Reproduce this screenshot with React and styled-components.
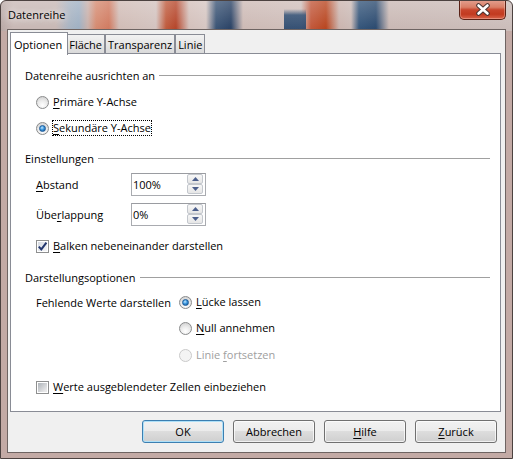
import React from "react";
import styled, { createGlobalStyle } from "styled-components";

const GlobalStyle = createGlobalStyle`
  html, body {
    margin: 0;
    padding: 0;
    background: #ffffff;
  }
  body {
    font-family: "Open Sans", "Noto Sans", sans-serif;
    font-size: 11px;
    color: #000;
  }
  u {
    text-decoration-thickness: 1px;
    text-underline-offset: 2px;
  }
`;

// blurred desktop behind the aero glass
const glassStripes = `linear-gradient(to right,
  #b9a9a6 0px, #c8b8b5 12px, #c8b8b5 55px, #a9b4c2 68px, #9fb0c3 78px,
  #c9b0aa 87px, #d58a70 95px, #d07a60 108px, #d1bcb6 118px, #d3c3bf 155px,
  #bf5a3c 165px, #b5452a 175px, #d4c0bb 188px, #d6c6c2 205px, #3a5475 215px,
  #2a4265 230px, #cdbab5 242px, #d0bfbb 300px, #c1573a 310px, #b8451f 325px,
  #cbb4ae 338px, #cbbab6 350px, #34557a 358px, #2b4a6f 375px, #c9b8b4 388px,
  #cbbdba 513px)`;

const Window = styled.div`
  width: 513px;
  height: 459px;
  box-sizing: border-box;
  display: flex;
  flex-direction: column;
  border: 1px solid #4c4240;
  border-radius: 6px 6px 0 0;
  overflow: hidden;
  background:
    linear-gradient(to bottom, rgba(255, 255, 255, 0.22), rgba(255, 255, 255, 0) 28px) 0 0 / 100% 30px no-repeat,
    linear-gradient(to bottom, rgba(37, 69, 108, 0) 8px, rgba(37, 69, 108, 0.9) 14px) 283px 0 / 22px 30px no-repeat,
    ${glassStripes} 0 0 / 100% 30px no-repeat,
    #c3aaa5;
`;

const TitleBar = styled.div`
  height: 28px;
  flex: none;
  display: flex;
  align-items: flex-start;
  justify-content: space-between;
`;

const Title = styled.div`
  padding-left: 7px;
  line-height: 28px;
  color: #000;
  text-shadow: 0 0 6px rgba(255, 255, 255, 0.95), 0 0 12px rgba(255, 255, 255, 0.8);
`;

const CloseButton = styled.div`
  width: 47px;
  height: 20px;
  box-sizing: border-box;
  margin: -1px 6px 0 0;
  border: 1px solid #5a2116;
  border-top: none;
  border-radius: 0 0 5px 5px;
  background: linear-gradient(#e3a090 0%, #d97e66 38%, #c8452c 52%, #c23a20 75%, #d9654c 100%);
  box-shadow: inset 0 0 0 1px rgba(255, 220, 210, 0.35);
  display: flex;
  align-items: center;
  justify-content: center;
`;

const Client = styled.div`
  flex: 1;
  margin: 0 6px 5px 6px;
  border: 1px solid #6e6462;
  background: #f0f0f0;
  padding: 2px 4px 9px 2px;
  display: flex;
  flex-direction: column;
  min-height: 0;
`;

const TabStrip = styled.div`
  height: 21px;
  flex: none;
  display: flex;
  align-items: flex-end;
`;

const Tab = styled.div`
  box-sizing: border-box;
  display: flex;
  align-items: center;
  border: 1px solid #898c95;
  border-bottom: none;
  position: relative;
  white-space: nowrap;
  ${({ $active }) =>
    $active
      ? `
    height: 23px;
    margin-bottom: -2px;
    margin-right: -2px;
    padding: 0 5px 0 3px;
    background: #ffffff;
    z-index: 2;
  `
      : `
    height: 19px;
    padding: 0 2px;
    background: linear-gradient(#f2f2f2, #e6e6e6 50%, #dadada);
    z-index: 1;
  `}
`;

const Panel = styled.div`
  flex: 1;
  border: 1px solid #898c95;
  background: #ffffff;
  padding: 11px 10px 0 14px;
  display: flex;
  flex-direction: column;
`;

const Heading = styled.div`
  height: 20px;
  margin-top: ${({ $mt }) => $mt || 0}px;
  display: flex;
  align-items: center;
  gap: 4px;
  white-space: nowrap;
  &::after {
    content: "";
    flex: 1;
    height: 1px;
    background: #a0a0a0;
  }
`;

const Indent = styled.div`
  padding-left: 11px;
  display: flex;
  flex-direction: column;
`;

const Row = styled.div`
  height: ${({ $h }) => $h || 20}px;
  margin-top: ${({ $mt }) => $mt || 0}px;
  display: flex;
  align-items: center;
  white-space: nowrap;
`;

const Label = styled.span`
  margin-left: 3px;
  padding: 0 1px;
  line-height: 16px;
  color: ${({ $disabled }) => ($disabled ? "#a0a0a0" : "#000")};
  outline: ${({ $focus }) => ($focus ? "1px dotted #000" : "none")};
  outline-offset: -1px;
`;

const RadioOuter = styled.span`
  flex: none;
  width: 13px;
  height: 13px;
  box-sizing: border-box;
  border-radius: 50%;
  border: 1px solid ${({ $disabled }) => ($disabled ? "#cacaca" : "#8a8b8c")};
  background: ${({ $disabled }) =>
    $disabled
      ? "#f4f4f4"
      : "radial-gradient(circle at 50% 75%, #ffffff 0%, #ececec 45%, #c9c9c9 100%)"};
  display: flex;
  align-items: center;
  justify-content: center;
`;

const RadioDot = styled.span`
  width: 5px;
  height: 5px;
  border-radius: 50%;
  border: 1px solid #1d5a98;
  background: radial-gradient(circle at 40% 35%, #c4e7ff 0%, #3a97de 45%, #104d8f 100%);
`;

const Radio = ({ checked, disabled }) => (
  <RadioOuter $disabled={disabled}>{checked && <RadioDot />}</RadioOuter>
);

const CheckOuter = styled.span`
  flex: none;
  width: 13px;
  height: 13px;
  box-sizing: border-box;
  border: 1px solid #8e8f8f;
  background: #ffffff;
  padding: 1px;
  display: flex;
`;

const CheckInner = styled.span`
  flex: 1;
  display: flex;
  align-items: center;
  justify-content: center;
  background: ${({ $checked }) =>
    $checked
      ? "linear-gradient(135deg, #d6dbe3, #f4f5f7)"
      : "linear-gradient(135deg, #aeb3b9, #e9e9ea 85%)"};
`;

const CheckBox = ({ checked }) => (
  <CheckOuter>
    <CheckInner $checked={checked}>
      {checked && (
        <svg width="11" height="11" viewBox="0 0 11 11" style={{ margin: "-1px" }}>
          <path d="M1.8 5.6 L4.3 8.4 L9.4 1.6" fill="none" stroke="#22366e" strokeWidth="2" />
        </svg>
      )}
    </CheckInner>
  </CheckOuter>
);

const FieldLabel = styled.span`
  width: 95px;
  flex: none;
`;

const SpinFrame = styled.div`
  width: 75px;
  height: 23px;
  box-sizing: border-box;
  border: 1px solid #a9abb0;
  border-top-color: #9a9ca1;
  background: #fff;
  display: flex;
  align-items: flex-end;
  padding: 0 2px 1px 1px;
`;

const SpinValue = styled.span`
  flex: 1;
  align-self: center;
`;

const SpinButtons = styled.div`
  display: flex;
  flex-direction: column;
  width: 16px;
`;

const SpinButton = styled.div`
  height: 10px;
  box-sizing: border-box;
  border: 1px solid #c3c7cd;
  border-radius: 2px;
  background: linear-gradient(#f7f7f7, #e6e6e6);
  display: flex;
  align-items: center;
  justify-content: center;
`;

const Arrow = ({ up }) => (
  <svg width="7" height="4" viewBox="0 0 7 4">
    <path d={up ? "M0 4 L3.5 0 L7 4 Z" : "M0 0 L7 0 L3.5 4 Z"} fill="#4c5f8c" />
  </svg>
);

const SpinBox = ({ value }) => (
  <SpinFrame>
    <SpinValue>{value}</SpinValue>
    <SpinButtons>
      <SpinButton>
        <Arrow up />
      </SpinButton>
      <SpinButton>
        <Arrow />
      </SpinButton>
    </SpinButtons>
  </SpinFrame>
);

const MissingGrid = styled.div`
  margin-top: ${({ $mt }) => $mt || 0}px;
  display: grid;
  grid-template-columns: 143px 1fr;
  align-items: start;
`;

const OptionColumn = styled.div`
  display: flex;
  flex-direction: column;
`;

const ButtonRow = styled.div`
  margin-top: 8px;
  padding-right: 4px;
  display: flex;
  justify-content: flex-end;
  gap: 9px;
`;

const Button = styled.div`
  width: 82px;
  height: 23px;
  box-sizing: border-box;
  border: 1px solid ${({ $default }) => ($default ? "#3c7fb1" : "#707070")};
  border-radius: 3px;
  background: linear-gradient(#f2f2f2 0%, #ebebeb 49%, #dddddd 50%, #cfcfcf 100%);
  box-shadow: inset 0 0 0 1px ${({ $default }) => ($default ? "#aee0f8" : "rgba(255,255,255,0.7)")};
  display: flex;
  align-items: center;
  justify-content: center;
`;

export default function App() {
  return (
    <>
      <GlobalStyle />
      <Window>
        <TitleBar>
          <Title>Datenreihe</Title>
          <CloseButton>
            <svg width="16" height="13" viewBox="0 0 16 13">
              <path d="M3.5 2.5 L12.5 10.5 M12.5 2.5 L3.5 10.5" stroke="#4a3432" strokeWidth="4.6" strokeLinecap="round" />
              <path d="M3.5 2.5 L12.5 10.5 M12.5 2.5 L3.5 10.5" stroke="#ffffff" strokeWidth="2.6" strokeLinecap="round" />
            </svg>
          </CloseButton>
        </TitleBar>
        <Client>
          <TabStrip>
            <Tab $active>Optionen</Tab>
            <Tab>Fläche</Tab>
            <Tab>Transparenz</Tab>
            <Tab>Linie</Tab>
          </TabStrip>
          <Panel>
            <Heading>Datenreihe ausrichten an</Heading>
            <Indent>
              <Row $mt={7}>
                <Radio />
                <Label>
                  <u>P</u>rimäre Y-Achse
                </Label>
              </Row>
              <Row $mt={6}>
                <Radio checked />
                <Label $focus>
                  <u>S</u>ekundäre Y-Achse
                </Label>
              </Row>
            </Indent>

            <Heading $mt={10}>Einstellungen</Heading>
            <Indent>
              <Row $mt={5} $h={23}>
                <FieldLabel>
                  <u>A</u>bstand
                </FieldLabel>
                <SpinBox value="100%" />
              </Row>
              <Row $mt={7} $h={23}>
                <FieldLabel>
                  Übe<u>r</u>lappung
                </FieldLabel>
                <SpinBox value="0%" />
              </Row>
              <Row $mt={10}>
                <CheckBox checked />
                <Label>
                  <u>B</u>alken nebeneinander darstellen
                </Label>
              </Row>
            </Indent>

            <Heading $mt={11}>Darstellungsoptionen</Heading>
            <Indent>
              <MissingGrid $mt={5}>
                <Row>Fehlende Werte darstellen</Row>
                <OptionColumn>
                  <Row>
                    <Radio checked />
                    <Label>
                      <u>L</u>ücke lassen
                    </Label>
                  </Row>
                  <Row $mt={6}>
                    <Radio />
                    <Label>
                      <u>N</u>ull annehmen
                    </Label>
                  </Row>
                  <Row $mt={7}>
                    <Radio disabled />
                    <Label $disabled>
                      Linie <u>f</u>ortsetzen
                    </Label>
                  </Row>
                </OptionColumn>
              </MissingGrid>
              <Row $mt={12}>
                <CheckBox />
                <Label>
                  <u>W</u>erte ausgeblendeter Zellen einbeziehen
                </Label>
              </Row>
            </Indent>
          </Panel>
          <ButtonRow>
            <Button $default>OK</Button>
            <Button>Abbrechen</Button>
            <Button>
              <span>
                <u>H</u>ilfe
              </span>
            </Button>
            <Button>
              <span>
                <u>Z</u>urück
              </span>
            </Button>
          </ButtonRow>
        </Client>
      </Window>
    </>
  );
}
